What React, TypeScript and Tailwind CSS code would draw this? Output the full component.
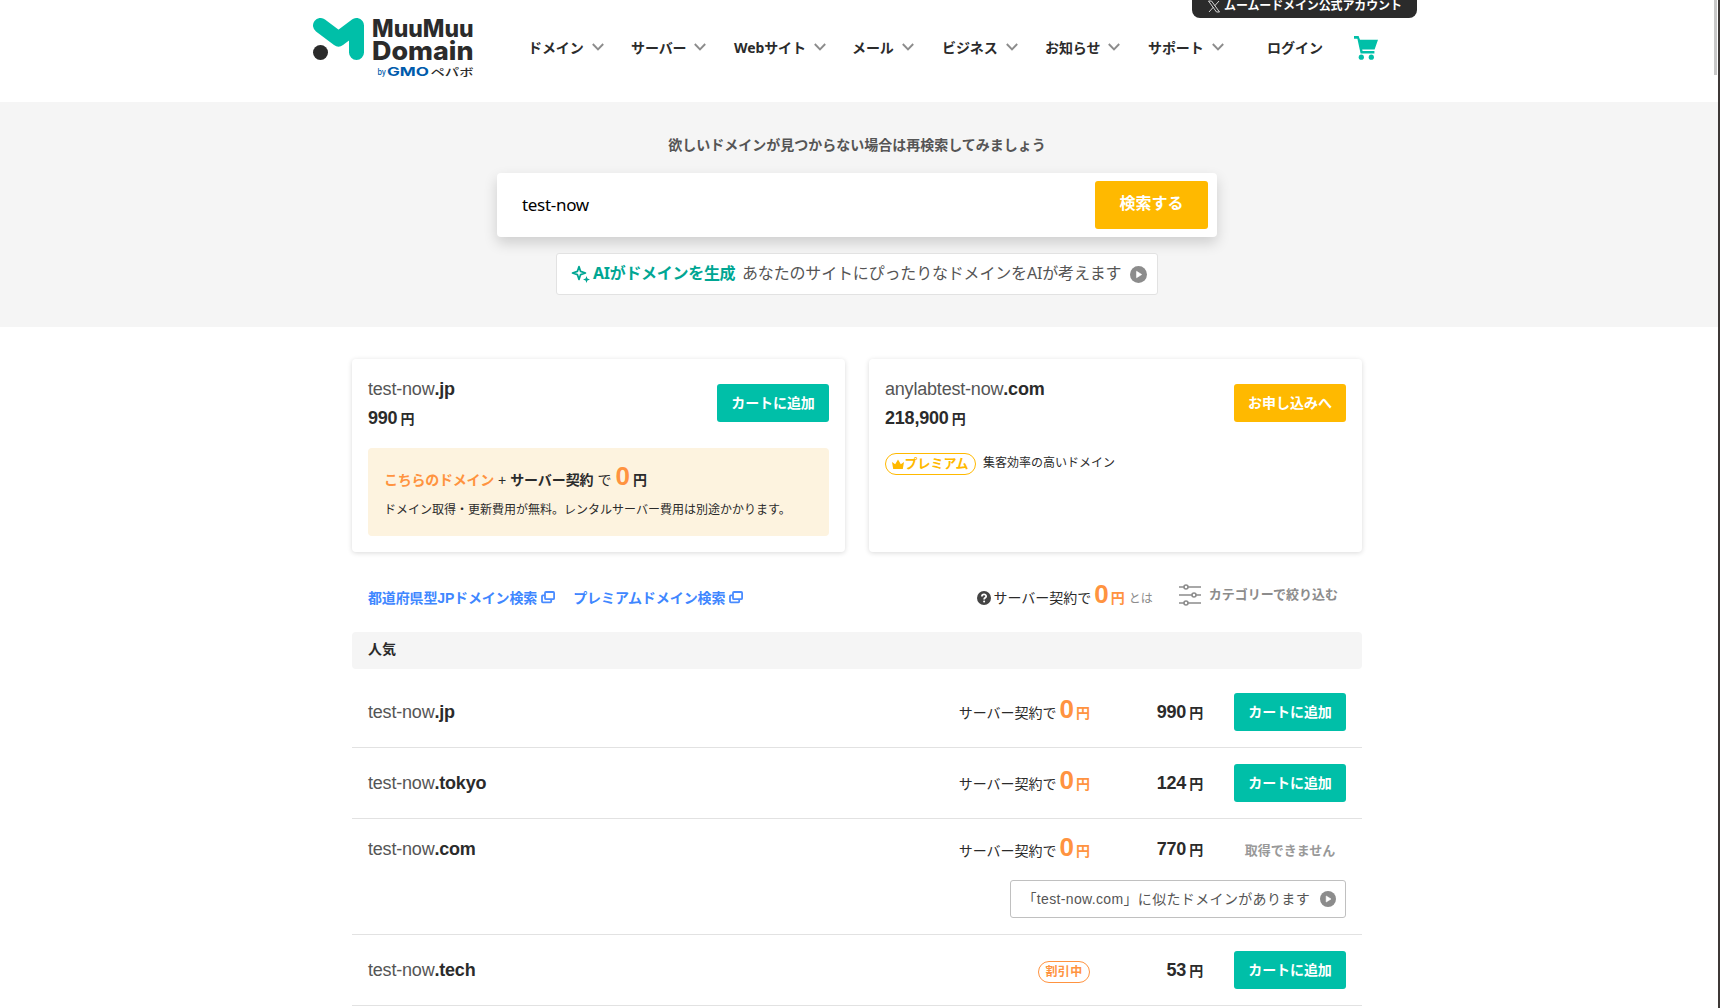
const navItems = [
  { label: "ドメイン", width: "w-[103px]" },
  { label: "サーバー", width: "w-[103px]" },
  { label: "Webサイト", width: "w-[118px]" },
  { label: "メール", width: "w-[90px]" },
  { label: "ビジネス", width: "w-[103px]" },
  { label: "お知らせ", width: "w-[103px]" },
  { label: "サポート", width: "w-[119px]" },
];

const rows = [
  { tld: ".jp", price: "990", free: true },
  { tld: ".tokyo", price: "124", free: true },
  { tld: ".com", price: "770", free: true, taken: true },
  { tld: ".tech", price: "53", free: false },
];

const Logo = () => (
  <div className="flex w-[160px] h-[60px] gap-[9px]">
    <svg width="51" height="42" viewBox="0 0 51 42" className="shrink-0">
      <path
        d="M7.5 7.5 L25.5 21 L43.5 7.5 V34.5"
        fill="none"
        stroke="#00bfa8"
        strokeWidth="15"
        strokeLinecap="round"
        strokeLinejoin="round"
      />
      <circle cx="7.5" cy="34.5" r="7.5" fill="#2b2b2b" />
    </svg>
    <svg width="101" height="62" viewBox="0 0 101 62" className="shrink-0 overflow-visible">
      <g fontFamily="Inter, sans-serif" fontWeight="800" fill="#2b2b2b">
        <text x="-1" y="18.5" fontSize="24" textLength="101.5" lengthAdjust="spacingAndGlyphs">MuuMuu</text>
        <text x="-1" y="42" fontSize="26" textLength="101.5" lengthAdjust="spacingAndGlyphs">Domain</text>
      </g>
      <text x="4.5" y="56.5" fontSize="8.5" fontWeight="500" fontFamily="Inter, sans-serif" fill="#005bac" textLength="8.5" lengthAdjust="spacingAndGlyphs">by</text>
      <text x="14" y="57.5" fontSize="12" fontWeight="700" fontFamily="Inter, sans-serif" fill="#005bac" textLength="42" lengthAdjust="spacingAndGlyphs">GMO</text>
      <text x="57.5" y="57.5" fontSize="10.5" fontWeight="500" fontFamily="'Noto Sans CJK JP', sans-serif" fill="#2b2b2b" textLength="43" lengthAdjust="spacingAndGlyphs">ペパボ</text>
    </svg>
  </div>
);

const Play = ({ size }: { size: number }) => (
  <svg width={size} height={size} viewBox="0 0 16 16" className="shrink-0">
    <circle cx="8" cy="8" r="8" fill="#8c8c8c" />
    <path d="M6.2 5 L11 8 L6.2 11 Z" fill="#fff" stroke="#fff" strokeWidth="0.6" strokeLinejoin="round" />
  </svg>
);

const WindowIcon = () => (
  <svg width="14" height="13" viewBox="0 0 14 13" className="shrink-0 -mt-px" fill="none" stroke="#4a8cff" strokeWidth="1.8">
    <rect x="4" y="1" width="9.1" height="7.2" rx="1" />
    <path d="M4 4.4 H1.8 Q1 4.4 1 5.2 V10.6 Q1 11.4 1.8 11.4 H9.4 Q10.2 11.4 10.2 10.6 V8.6" />
  </svg>
);

const CartButton = () => (
  <button className="w-[112px] h-[38px] shrink-0 rounded-[3px] bg-[#00bfa8] text-white text-sm font-bold pb-px tracking-[-0.1px]">
    カートに追加
  </button>
);

const ServerFree = () => (
  <span className="flex items-baseline text-sm leading-[21px] text-[#2b2b2b] whitespace-nowrap">
    サーバー契約で
    <b className="text-[26px] leading-[26px] text-[#ff9340] ml-[3px] mr-[2px]">0</b>
    <b className="text-[#ff9340]">円</b>
  </span>
);

const Domain = ({ name, tld }: { name: string; tld: string }) => (
  <p className="text-lg leading-[28px] tracking-[-0.2px] text-[#555]">
    {name}
    <b className="text-[#2b2b2b]">{tld}</b>
  </p>
);

const Price = ({ value }: { value: string }) => (
  <p className="text-lg leading-[28px] tracking-[-0.2px] font-bold text-[#2b2b2b] whitespace-nowrap">
    {value}
    <span className="text-sm ml-[3px]">円</span>
  </p>
);

const Header = () => (
  <header className="relative h-[102px] w-[1714px] pl-[313px] flex items-start">
    <div className="pt-[18px] w-[215px]">
      <Logo />
    </div>
    <nav className="flex items-start pt-[36px] text-sm leading-[23px] font-bold text-[#2b2b2b] font-['Noto_Sans','Noto_Sans_CJK_JP',sans-serif]">
      {navItems.map((item) => (
        <div key={item.label} className={`flex items-start gap-[8px] ${item.width}`}>
          <span className="whitespace-nowrap tracking-[-0.1px] h-[23px]">{item.label}</span>
          <svg width="12" height="8" viewBox="0 0 12 8" className="mt-[7px] shrink-0" fill="none">
            <path d="M0.8 1 L6 6.4 L11.2 1" stroke="#8c8c8c" strokeWidth="1.9" />
          </svg>
        </div>
      ))}
      <span className="w-[87px]">ログイン</span>
      <svg width="25" height="24" viewBox="0 0 25 24">
        <path d="M0 0 H4.6 L6 3.8 H24 L20.6 13.6 H8.2 L8.6 15 H20.4 V17.6 H6.6 L3.4 2.8 H0 Z" fill="#00bfa8" />
        <circle cx="7.3" cy="21.2" r="2.6" fill="#00bfa8" />
        <circle cx="17.3" cy="21.2" r="2.6" fill="#00bfa8" />
      </svg>
    </nav>
    <div className="absolute left-[1192px] top-0 w-[225px] h-[18px] rounded-b-lg bg-[#2b2b2b] flex items-end gap-[4px] pl-[16px] text-white text-xs leading-[23px] tracking-[-0.12px] font-bold whitespace-nowrap">
      <svg width="12" height="13" viewBox="0 0 24 24" className="mb-[5px] shrink-0" fill="none" stroke="#fff" strokeWidth="1.6">
        <path d="M1 1 H7 L23 23 H17 Z M22 1 L13.5 10.5 M10.5 13.5 L2 23" />
      </svg>
      ムームードメイン公式アカウント
    </div>
  </header>
);

const Search = () => (
  <section className="h-[225px] w-[1718px] bg-[#f5f5f5]">
    <div className="w-[1714px] flex flex-col items-center pt-[33px]">
      <p className="text-sm leading-[20px] font-bold text-[#555]">
        欲しいドメインが見つからない場合は再検索してみましょう
      </p>
      <div className="mt-[18px] w-[720px] h-[64px] rounded-[4px] bg-white shadow-[0_6px_14px_rgba(0,0,0,0.16)] flex items-center justify-between pl-[25px] pr-[9px]">
        <span className="text-[17px] tracking-[-0.3px] text-black font-['Noto_Sans',sans-serif]">test-now</span>
        <button className="w-[113px] h-[48px] rounded-[3px] bg-[#ffb900] text-white text-base font-bold pb-[2px]">検索する</button>
      </div>
      <div className="mt-[16px] w-[602px] h-[42px] rounded-[3px] border border-[#e2e2e2] bg-white flex items-center pl-[14px] whitespace-nowrap font-['Noto_Sans','Noto_Sans_CJK_JP',sans-serif]">
        <svg width="20" height="20" viewBox="0 0 20 20" className="mr-[2px] shrink-0">
          <path d="M8 2.5 L9.6 7.4 L14.5 9 L9.6 10.6 L8 15.5 L6.4 10.6 L1.5 9 L6.4 7.4 Z" fill="none" stroke="#00a693" strokeWidth="1.7" strokeLinejoin="round" />
          <path d="M15.5 12 L16.4 14.6 L19 15.5 L16.4 16.4 L15.5 19 L14.6 16.4 L12 15.5 L14.6 14.6 Z" fill="#00a693" />
        </svg>
        <b className="w-[143px] text-base leading-[24px] pb-[2px] tracking-[-0.3px] text-[#00a693] mr-[6px]">AIがドメインを生成</b>
        <span className="w-[380px] text-base leading-[24px] pb-[2px] tracking-[-0.17px] text-[#555] mr-[8px]">あなたのサイトにぴったりなドメインをAIが考えます</span>
        <Play size={17} />
      </div>
    </div>
  </section>
);

const cardClass = "w-[493px] h-[193px] rounded-[4px] bg-white shadow-[0_1px_5px_rgba(0,0,0,0.15)] p-4";

const Recommend = () => (
  <div className="flex justify-between">
    <div className={cardClass}>
      <div className="flex justify-between h-[73px]">
        <div className="flex flex-col gap-px">
          <Domain name="test-now" tld=".jp" />
          <Price value="990" />
        </div>
        <div className="pt-[9px]">
          <CartButton />
        </div>
      </div>
      <div className="h-[88px] rounded-[4px] bg-[#fdf3df] px-4 pt-[14px] text-[#2b2b2b] whitespace-nowrap">
        <p className="text-sm leading-[28px] flex items-baseline">
          <b className="text-[#ff9340] tracking-[-0.25px] mr-[4px]">こちらのドメイン</b>+<b className="tracking-[-0.1px] ml-[4px] mr-[4px]">サーバー契約</b>で
          <b className="text-[26px] leading-[28px] text-[#ff9340] ml-[4px] mr-[3px]">0</b>
          <b>円</b>
        </p>
        <p className="text-xs leading-[18px] mt-[7px]">ドメイン取得・更新費用が無料。レンタルサーバー費用は別途かかります。</p>
      </div>
    </div>
    <div className={cardClass}>
      <div className="flex justify-between h-[73px]">
        <div className="flex flex-col gap-px">
          <Domain name="anylabtest-now" tld=".com" />
          <Price value="218,900" />
        </div>
        <div className="pt-[9px]">
          <button className="w-[112px] h-[38px] rounded-[3px] bg-[#ffb900] text-white text-sm font-bold pb-px">お申し込みへ</button>
        </div>
      </div>
      <div className="flex items-start pt-[5px] gap-[7px]">
        <span className="w-[91px] h-[22px] rounded-full border border-[#ffb900] text-[#ffb900] text-[13px] leading-[20px] font-bold flex items-center justify-center whitespace-nowrap">
          <svg width="12" height="11" viewBox="0 0 12 11" className="shrink-0" fill="#ffb900">
            <path d="M0 3 L3.2 5.2 L6 0.6 L8.8 5.2 L12 3 L10.8 10 H1.2 Z" />
          </svg>
          プレミアム
        </span>
        <span className="text-xs leading-[20px] text-[#2b2b2b]">集客効率の高いドメイン</span>
      </div>
    </div>
  </div>
);

const Tools = () => (
  <div className="flex h-[80px] pt-[35px] pl-4 pr-[24px] whitespace-nowrap">
    <a className="flex items-center h-[22px] gap-[4px] text-sm font-bold tracking-[-0.15px] text-[#3f87ff] mr-[18px]">
      都道府県型JPドメイン検索 <WindowIcon />
    </a>
    <a className="flex items-center h-[22px] gap-[4px] text-sm font-bold tracking-[-0.07px] text-[#3f87ff]">
      プレミアムドメイン検索 <WindowIcon />
    </a>
    <div className="ml-auto flex h-[22px]">
      <svg width="14" height="14" viewBox="0 0 14 14" className="mr-[2px] mt-[4px]" fill="none">
        <circle cx="7" cy="7" r="7" fill="#444" />
        <path d="M4.9 5.4 C4.9 2.7 9.2 2.8 9.2 5.3 C9.2 6.8 7.1 6.8 7.1 8.4" stroke="#fff" strokeWidth="1.7" />
        <circle cx="7.1" cy="10.6" r="1" fill="#fff" />
      </svg>
      <div className="flex items-baseline -mt-[6px]">
        <ServerFree />
        <span className="text-xs text-[#8c8c8c] ml-[4px]">とは</span>
      </div>
    </div>
    <div className="flex items-center h-[22px] ml-[26px] -mt-[3px] text-[13px] font-bold text-[#8c8c8c]">
      <svg width="22" height="22" viewBox="0 0 22 22" className="mr-[8px]" fill="none" stroke="#8c8c8c" strokeWidth="1.6">
        <path d="M0 3 H5 M9 3 H22 M0 11 H13 M17 11 H22 M0 19 H5 M9 19 H22" />
        <circle cx="7" cy="3" r="2" />
        <circle cx="15" cy="11" r="2" />
        <circle cx="7" cy="19" r="2" />
      </svg>
      カテゴリーで絞り込む
    </div>
  </div>
);

const Results = () => (
  <div>
    <h2 className="h-[37px] rounded-[4px] bg-[#f5f5f5] pl-4 text-sm leading-[35px] font-bold text-[#2b2b2b] mb-[8px]">人気</h2>
    {rows.map((row) => (
      <div key={row.tld} className="border-b border-[#e2e2e2] p-4">
        <div className={`flex items-center ${row.taken ? "h-[27px]" : "h-[38px]"}`}>
          <Domain name="test-now" tld={row.tld} />
          <div className={`ml-auto flex justify-end w-[140px] ${row.taken ? "mb-[2px]" : row.free ? "mb-[5px]" : ""}`}>
            {row.free ? (
              <ServerFree />
            ) : (
              <span className="w-[52px] h-[22px] mt-[4px] rounded-full border border-[#ff9340] text-[#ff9340] text-xs leading-[21px] tracking-[0.3px] font-bold text-center">
                割引中
              </span>
            )}
          </div>
          <div className="w-[113px] flex justify-end mr-[31px]">
            <Price value={row.price} />
          </div>
          {row.taken ? (
            <span className="w-[112px] text-center text-[13px] font-bold text-[#999] pt-[4px]">取得できません</span>
          ) : (
            <CartButton />
          )}
        </div>
        {row.taken && (
          <div className="flex justify-end mt-[18px]">
            <div className="w-[336px] h-[38px] rounded-[3px] border border-[#c0c0c0] flex items-center justify-end gap-[10px] pr-[9px] text-sm tracking-[0.35px] text-[#555] whitespace-nowrap">
              「test-now.com」に似たドメインがあります
              <Play size={16} />
            </div>
          </div>
        )}
      </div>
    ))}
  </div>
);

const App = () => {
  return (
    <div className="relative w-[1720px] h-[1008px] overflow-hidden bg-white font-['Liberation_Sans','Noto_Sans_CJK_JP',sans-serif]">
      <Header />
      <Search />
      <main className="w-[1010px] ml-[352px] pt-[32px]">
        <Recommend />
        <Tools />
        <Results />
      </main>
      {/* Scrollbar and window edge */}
      <div className="absolute left-[1714px] top-0 w-[3px] h-[75px] bg-[#c8c8c8]" />
      <div className="absolute right-0 top-0 w-[2px] h-full bg-[#3d3836]" />
    </div>
  );
};

export default App;
